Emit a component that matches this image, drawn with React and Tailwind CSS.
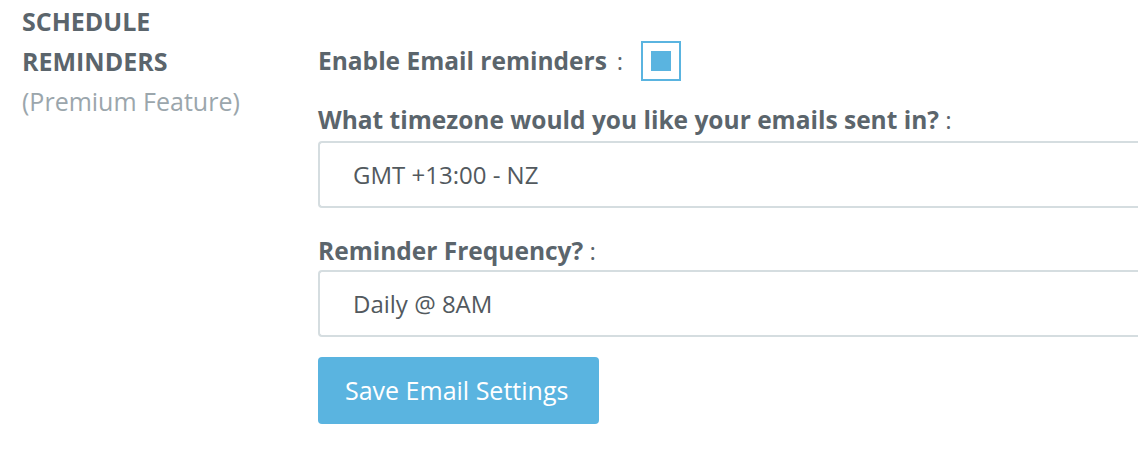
export default function App() {
  return (
    <div className="h-[472px] w-[1138px] overflow-hidden bg-white" style={{ fontFamily: "'Open Sans', 'Liberation Sans', sans-serif" }}>
      <div className="flex">
        <div className="w-[318px] shrink-0 pl-[22px] pt-[1px]">
          <div className="text-[25px] font-bold uppercase leading-[40px] text-[#5b656c]">Schedule</div>
          <div className="text-[25px] font-bold uppercase leading-[40px] text-[#5b656c]">Reminders</div>
          <div className="text-[25px] leading-[40px] text-[#9ba6ac]">(Premium Feature)</div>
        </div>

        <div className="min-w-0 flex-1 pt-[41px]">
          <div className="flex h-[40px] items-center">
            <span className="text-[24.5px] font-bold text-[#5b656c]">Enable Email reminders</span>
            <span className="ml-[10px] text-[24px] text-[#5b656c]">:</span>
            <span className="ml-[18px] flex h-[40px] w-[40px] items-center justify-center border-2 border-[#5ab4e0] bg-white">
              <span className="h-[20px] w-[20px] bg-[#5ab4e0]" />
            </span>
          </div>

          <div className="mt-[24px] text-[24.5px] leading-[30px] text-[#5b656c]">
            <span className="font-bold">What timezone would you like your emails sent in?</span> :
          </div>
          <div className="mt-[6px] flex h-[67px] w-[900px] items-center rounded-l-[4px] border-2 border-r-0 border-[#d5dde0] pl-[33px] text-[24px] text-[#52595e]">
            GMT +13:00 - NZ
          </div>

          <div className="mt-[28px] text-[24.5px] leading-[30px] text-[#5b656c]">
            <span className="font-bold">Reminder Frequency?</span> :
          </div>
          <div className="mt-[4px] flex h-[67px] w-[900px] items-center rounded-l-[4px] border-2 border-r-0 border-[#d5dde0] pl-[33px] text-[24px] text-[#52595e]">
            Daily @ 8AM
          </div>

          <button type="button" className="mt-[20px] flex h-[67px] w-[281px] items-center rounded-[4px] bg-[#5ab4e0] pl-[27px] text-[25px] text-white">
            Save Email Settings
          </button>
        </div>
      </div>
    </div>
  );
}
